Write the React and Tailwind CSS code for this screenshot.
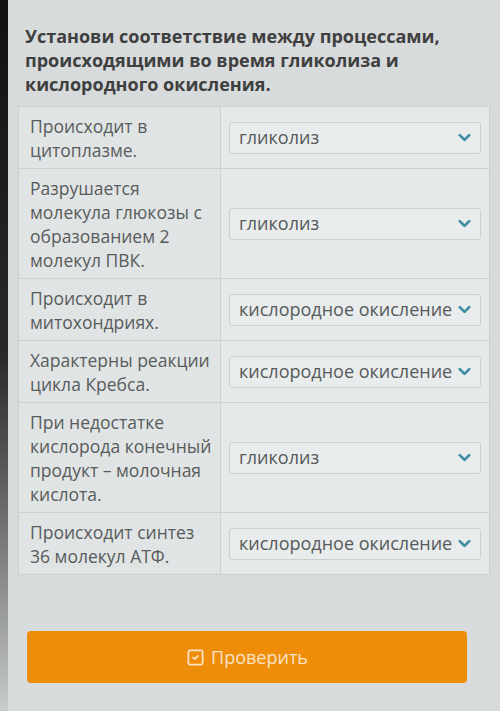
import { ChevronDown, SquareCheck } from "lucide-react";

const rows = [
    { text: ["Происходит в", "цитоплазме."], answer: "гликолиз" },
    {
        text: ["Разрушается", "молекула глюкозы с", "образованием 2", "молекул ПВК."],
        answer: "гликолиз",
    },
    { text: ["Происходит в", "митохондриях."], answer: "кислородное окисление" },
    { text: ["Характерны реакции", "цикла Кребса."], answer: "кислородное окисление" },
    {
        text: ["При недостатке", "кислорода конечный", "продукт – молочная", "кислота."],
        answer: "гликолиз",
    },
    { text: ["Происходит синтез", "36 молекул АТФ."], answer: "кислородное окисление" },
];

function Select({ value }) {
    return (
        <div className="flex items-center justify-between h-[32px] pl-[9px] pr-[6px] bg-[#e9ecec] border border-[#c9d0d0] rounded-[3px] text-[18px] text-[#555a5a]">
            <span className="whitespace-nowrap">{value}</span>
            <ChevronDown size={19} strokeWidth={3.5} className="text-[#3f8ea3] shrink-0" />
        </div>
    );
}

export default function App() {
    return (
        <div
            className="flex w-[500px] h-[711px] bg-[#d8dbdb] overflow-hidden"
            style={{ fontFamily: '"Open Sans", "Noto Sans", sans-serif' }}
        >
            <div className="w-[8px] shrink-0 bg-gradient-to-b from-[#111] via-[#2a2a2a] to-[#c9cccc]" />

            <div className="flex-1 flex flex-col pt-[24px] pl-[10px]">
                <h1 className="pl-[7px] pr-[14px] text-[18px] leading-[24px] font-bold text-[#3e4040]">
                    Установи соответствие между процессами, происходящими во время гликолиза и кислородного окисления.
                </h1>

                <div className="mt-[10px] w-[472px] border border-[#cdd1d1] bg-[#e3e6e6]">
                    {rows.map((row, i) => (
                        <div
                            key={i}
                            className={
                                "flex " + (i < rows.length - 1 ? "border-b border-[#cdd1d1]" : "")
                            }
                        >
                            <div className="w-[202px] shrink-0 border-r border-[#cdd1d1] px-[11px] py-[6.5px] text-[17.5px] leading-[24px] text-[#585c5c] bg-[#e1e4e4]">
                                {row.text.map((t, j) => (
                                    <div key={j} className="whitespace-nowrap">{t}</div>
                                ))}
                            </div>
                            <div className="flex-1 flex flex-col justify-center pl-[8px] pr-[8px] bg-[#e6e9e9]">
                                <Select value={row.answer} />
                            </div>
                        </div>
                    ))}
                </div>

                <button className="mt-[56px] ml-[9px] w-[440px] h-[52px] rounded-[4px] bg-[#ee8d0a] flex items-center justify-center gap-[6px] text-[18px] text-[#fbe3c6]">
                    <SquareCheck size={19} strokeWidth={2.2} />
                    <span>Проверить</span>
                </button>
            </div>
        </div>
    );
}
